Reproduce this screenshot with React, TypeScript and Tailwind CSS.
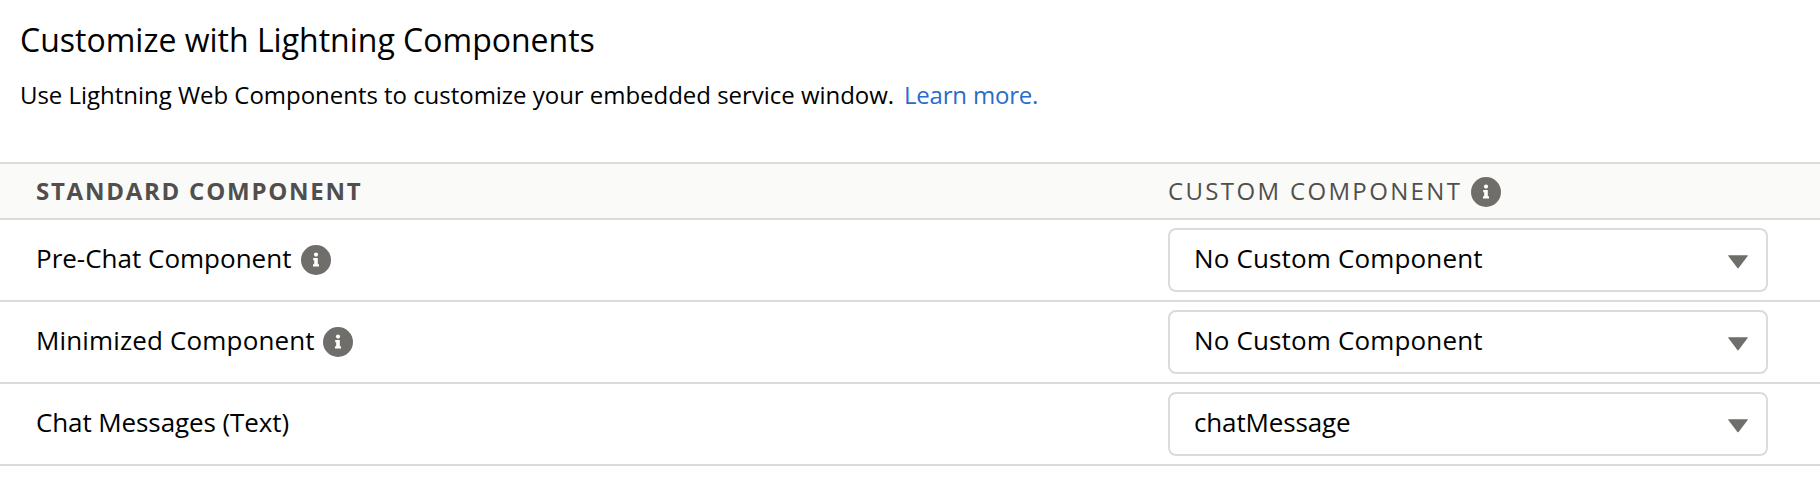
const infoColor = 'fill-[#706e6b]';

function InfoIcon() {
  return (
    <svg viewBox="0 0 30 30" className="h-[30px] w-[30px] shrink-0" aria-hidden="true">
      <circle cx="15" cy="15" r="15" className={infoColor} />
      <circle cx="15" cy="9.6" r="2.1" fill="#fff" />
      <path d="M12.2 13h4.6v6.3h1.2v2.3h-6v-2.3h1.2v-4h-1z" fill="#fff" />
    </svg>
  );
}

function Picker({ value, spacing }: { value: string; spacing: string }) {
  return (
    <button
      type="button"
      className="flex h-16 w-[600px] items-center justify-between rounded-lg border-2 border-[#dddbda] bg-white pl-6 pr-[18px] text-left"
    >
      <span className={`pb-1 text-[26px] leading-9 ${spacing}`}>{value}</span>
      <svg viewBox="0 0 20 14" className="mt-1 h-[14px] w-5" aria-hidden="true">
        <path d="M.6.3h18.8q.8 0 .3.7L10.6 13q-.6.7-1.2 0L.3 1Q-.2.3.6.3z" className={infoColor} />
      </svg>
    </button>
  );
}

const rows = [
  { label: 'Pre-Chat Component', info: true, value: 'No Custom Component', ls: 'w-[257px] tracking-[0px]', vs: 'tracking-[0.15px]' },
  { label: 'Minimized Component', info: true, value: 'No Custom Component', ls: 'w-[279px] tracking-[0.15px]', vs: 'tracking-[0.15px]' },
  { label: 'Chat Messages (Text)', info: false, value: 'chatMessage', ls: 'tracking-[-0.1px]', vs: 'tracking-[-0.15px]' },
];

export default function App() {
  return (
    <main className="h-[494px] overflow-hidden bg-white font-['Open_Sans','Noto_Sans',sans-serif] text-black">
      <header className="flex h-[162px] flex-col pl-5 pt-[19px]">
        <h1 className="text-[32px] leading-[42px]">Customize with Lightning Components</h1>
        <p className="mt-4 flex text-[24px] leading-9">
          <span className="w-[884px] whitespace-nowrap tracking-[-0.03px]">
            Use Lightning Web Components to customize your embedded service window.
          </span>
          <a href="#" className="whitespace-nowrap text-[#2a6bcb] tracking-[-0.2px]">Learn more.</a>
        </p>
      </header>
      <div className="grid h-[58px] grid-cols-[1132px_1fr] items-center border-y-2 border-[#dddbda] bg-[#fafaf9] pl-9 text-[24px] leading-9 text-[#514f4d]">
        <span className="font-bold tracking-[1.75px]">STANDARD COMPONENT</span>
        <div className="flex items-center">
          <span className="w-[303px] whitespace-nowrap tracking-[2.35px]">CUSTOM COMPONENT</span>
          <span className="pt-0.5"><InfoIcon /></span>
        </div>
      </div>
      {rows.map((row) => (
        <div
          key={row.label}
          className="grid h-[82px] grid-cols-[1132px_1fr] items-center border-b-2 border-[#dddbda] pl-9"
        >
          <div className="flex items-center gap-2">
            <span className={`whitespace-nowrap pb-1 text-[26px] leading-9 ${row.ls}`}>{row.label}</span>
            {row.info && <InfoIcon />}
          </div>
          <Picker value={row.value} spacing={row.vs} />
        </div>
      ))}
    </main>
  );
}
